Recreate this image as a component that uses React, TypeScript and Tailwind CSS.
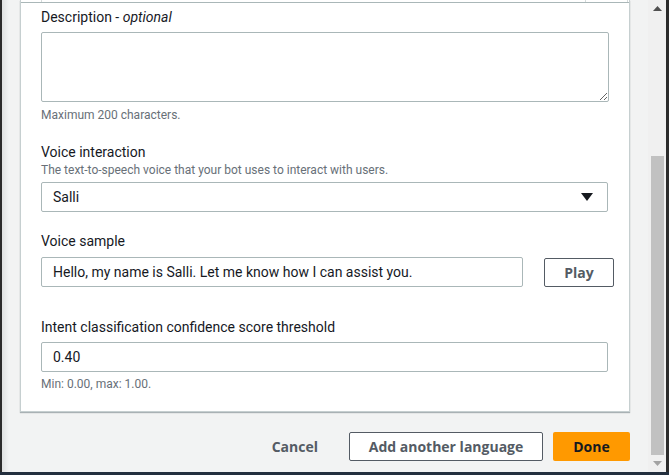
import React from 'react';

// ======================================================
// Language settings panel (bottom part of a scrolled modal)
// ======================================================

const font = { fontFamily: 'Roboto, "Open Sans", Arial, sans-serif' };
const buttonFont = { fontFamily: '"Open Sans", Roboto, Arial, sans-serif' };

const Label: React.FC<{ children: React.ReactNode; className?: string }> = ({ children, className = '' }) => (
  <div className={`text-[14px] leading-[20px] text-[#16191f] ${className}`}>{children}</div>
);

const Hint: React.FC<{ children: React.ReactNode; className?: string }> = ({ children, className = '' }) => (
  <div className={`text-[12px] leading-[16px] text-[#687078] ${className}`}>{children}</div>
);

const Scrollbar: React.FC = () => (
  <div className="w-[18px] h-full bg-[#f0f0f0] flex flex-col items-center">
    <div className="h-[17px] w-full flex items-center justify-center">
      <svg width="9" height="5" viewBox="0 0 9 5">
        <polygon points="0,5 9,5 4.5,0" fill="#505050" />
      </svg>
    </div>
    <div className="mt-[139px] w-[13px] h-[299px] bg-[#c1c1c1]" />
    <div className="flex-1 w-full flex items-center justify-center">
      <svg width="9" height="5" viewBox="0 0 9 5">
        <polygon points="0,0 9,0 4.5,5" fill="#a3a3a3" />
      </svg>
    </div>
  </div>
);

export default function App() {
  return (
    <div className="w-[669px] h-[475px] flex flex-col overflow-hidden bg-[#232f3e]" style={font}>
      <div className="h-[472px] flex">
        {/* borde izquierdo oscuro */}
        <div className="w-[2px] bg-[#2b2b2b]" />

        {/* area principal */}
        <div className="w-[646px] h-full bg-gradient-to-r from-[#dfe1e1] via-[#f2f3f3] to-[#f2f3f3] bg-[length:14px_100%] bg-no-repeat bg-[#f2f3f3] pl-[18px] flex flex-col">
          {/* tarjeta */}
          <div className="w-[610px] h-[412px] bg-white border border-t-0 border-[#c6cfd0] shadow-[0_1px_1px_0_rgba(0,28,36,0.3)] flex flex-col">
            {/* resto de la fila anterior, cortada por el scroll */}
            <div className="h-[3px] border-b border-[#aab7b8] flex">
              <div className="ml-[20px] w-[544px] border-l border-[#d5dbdb]" />
              <div className="w-[42px] border-l border-[#d5dbdb]" />
              <div className="border-l border-[#d5dbdb]" />
            </div>

            <div className="px-[20px] flex flex-col">
              <Label className="mt-[4px]">
                Description - <i>optional</i>
              </Label>
              <textarea className="mt-[5px] w-[568px] h-[70px] border border-[#aab7b8] rounded-[2px] outline-none block" />
              <Hint className="mt-[5px]">Maximum 200 characters.</Hint>

              <Label className="mt-[19px]">Voice interaction</Label>
              <Hint>The text-to-speech voice that your bot uses to interact with users.</Hint>
              <div className="mt-[4px] w-[567px] h-[30px] border border-[#aab7b8] rounded-[2px] flex items-center justify-between pl-[11px] pr-[14px]">
                <span className="text-[14px] text-[#16191f]">Salli</span>
                <svg width="12" height="8" viewBox="0 0 12 8">
                  <polygon points="0,0 12,0 6,8" fill="#16191f" />
                </svg>
              </div>

              <Label className="mt-[19px]">Voice sample</Label>
              <div className="mt-[6px] flex items-center">
                <div className="shrink-0 w-[482px] h-[30px] border border-[#aab7b8] rounded-[2px] flex items-center pl-[11px]">
                  <span className="text-[14px] text-[#16191f]">
                    Hello, my name is Salli. Let me know how I can assist you.
                  </span>
                </div>
                <button
                  style={buttonFont}
                  className="shrink-0 ml-[21px] w-[70px] h-[29px] border border-[#545b64] rounded-[2px] text-[14px] font-bold text-[#545b64] bg-white"
                >
                  Play
                </button>
              </div>

              <Label className="mt-[30px]">Intent classification confidence score threshold</Label>
              <div className="mt-[5px] w-[567px] h-[30px] border border-[#aab7b8] rounded-[2px] flex items-center pl-[11px]">
                <span className="text-[14px] text-[#16191f]">0.40</span>
              </div>
              <Hint className="mt-[4px]">Min: 0.00, max: 1.00.</Hint>
            </div>
          </div>

          {/* botones del pie */}
          <div className="mt-[20px] w-[610px] flex items-center justify-end" style={buttonFont}>
            <button className="text-[14px] font-bold text-[#545b64] mr-[31px]">Cancel</button>
            <button className="w-[194px] h-[29px] border border-[#545b64] rounded-[2px] bg-white text-[14px] font-bold text-[#545b64]">
              Add another language
            </button>
            <button className="ml-[10px] w-[77px] h-[29px] rounded-[2px] bg-[#ff9900] text-[14px] font-bold text-[#16191f]">
              Done
            </button>
          </div>
        </div>

        <Scrollbar />
        <div className="w-[3px] bg-[#2b2b2b]" />
      </div>
    </div>
  );
}
